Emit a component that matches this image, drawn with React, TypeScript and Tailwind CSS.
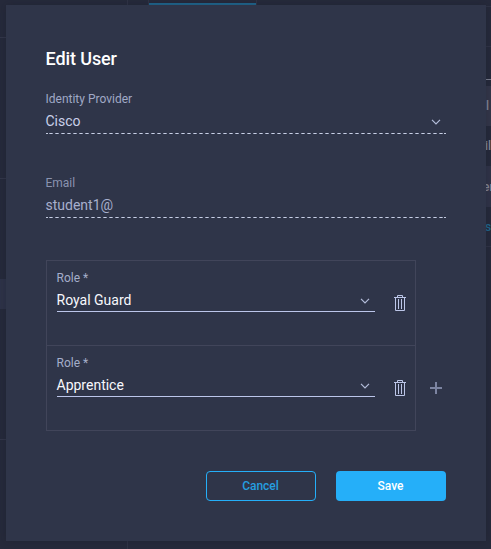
import React from "react";

function Chevron({ className }: { className?: string }) {
  return (
    <svg className={className} width="10" height="6" viewBox="0 0 10 6" fill="none" stroke="#b4bdda" strokeWidth="1.2">
      <path d="M1 0.8 L5 4.8 L9 0.8" />
    </svg>
  );
}

function Trash() {
  return (
    <svg width="12" height="16" viewBox="0 0 12 16" fill="none" stroke="#bcc6e8" strokeWidth="1" className="block">
      <path d="M0 2.5H12M3.5 2.5V0.5H8.5V2.5M1.5 2.5V15.5H10.5V2.5M4.5 4V14M7.5 4V14" />
    </svg>
  );
}

function DashedLine() {
  return (
    <div className="flex h-px gap-px">
      <span className="w-[2px] bg-[#c3cade]" />
      <span className="flex-1 bg-[repeating-linear-gradient(90deg,#949bb4_0_1px,#c8cfe4_1px_3px,#949bb4_3px_4px,transparent_4px_6px)]" />
      <span className="w-[2px] bg-[#c3cade]" />
    </div>
  );
}

function Field({ label, value, dim, chevron }: { label: string; value: string; dim?: boolean; chevron?: boolean }) {
  return (
    <div>
      <div className={`-ml-[0.5px] h-4 text-[12px] leading-4 ${dim ? "text-[#8a93b0]" : "text-[#a0a9c6]"}`}>{label}</div>
      <div
        className={`-ml-[0.5px] mt-[2px] flex h-6 items-center justify-between text-[14px] leading-6 ${dim ? "text-[#a7afcd]" : "text-[#c9d0ea]"}`}
      >
        <span>{value}</span>
        {chevron && <Chevron className="mr-[5px] mt-[2px]" />}
      </div>
      <DashedLine />
    </div>
  );
}

function Role({ value }: { value: string }) {
  return (
    <div className="flex h-[85px] border-b border-[#41455a] pl-[10px] pt-[9px]">
      <div className="w-[318px]">
        <div className="-ml-[0.5px] h-4 text-[12px] leading-4 text-[#a5aeca]">Role *</div>
        <div className="mt-[2px] flex h-6 items-center justify-between border-b border-[#bcc6ea] text-[14px] leading-6 text-[#f7f8fc]">
          <span className="-ml-[0.5px]">{value}</span>
          <Chevron className="mr-[5px] mt-[3px]" />
        </div>
      </div>
      <div className="ml-[19px] mt-[25px]">
        <Trash />
      </div>
    </div>
  );
}

function Backdrop() {
  return (
    <div className="flex h-full justify-between bg-[#262a3b]">
      <div className="flex w-[128px] flex-col border-r border-[#303446]">
        <div className="h-[38px] border-b border-[#33374a]" />
        <div className="h-[141px] border-b border-[#33374a]" />
        <div className="h-[100px]" />
        <div className="h-[30px] bg-[#2e3348]" />
        <div className="h-[131px] border-b border-[#33374a]" />
      </div>
      <div className="ml-5 mr-auto h-[5px] w-[109px] border-x border-[#303446]">
        <div className="mt-[3px] h-[2px] bg-[#20688f]" />
      </div>
      <div className="flex w-[12px] flex-col text-[12px] font-medium text-[#868998]">
        <div className="h-[7px] border-b border-[#303446]" />
        <div className="h-10 border-b border-[#303446]" />
        <div className="h-[33px] border-b border-[#7d8090]" />
        <div className="h-[6px]" />
        <div className="flex h-10 items-center justify-end bg-[#34374a] pr-[2px]">l</div>
        <div className="flex h-10 items-center justify-end">il</div>
        <div className="flex h-[41px] items-center bg-[#303448] pl-[4px]">er</div>
        <div className="flex h-10 items-center border-b border-[#303446] pl-[6px] text-[#20688f]">se</div>
      </div>
    </div>
  );
}

export default function App() {
  return (
    <div className="relative h-[549px] w-[491px] overflow-hidden font-['Roboto',sans-serif]">
      <Backdrop />
      <div className="absolute left-[6px] top-[5px] h-[536px] w-[480px] bg-[#2f3549] px-10 pt-[42px] shadow-[0_0_8px_rgba(20,22,35,0.3)]">
        <h1 className="-ml-[0.5px] h-6 text-[18px] font-medium leading-6 tracking-[-0.1px] text-white">Edit User</h1>
        <div className="mt-5">
          <Field label="Identity Provider" value="Cisco" chevron />
        </div>
        <div className="mt-[41px]">
          <Field label="Email" value="student1@" dim />
        </div>
        <div className="mt-[42px] flex">
          <div className="w-[370px] border border-b-0 border-[#41455a]">
            <Role value="Royal Guard" />
            <Role value="Apprentice" />
          </div>
          <svg width="12" height="12" viewBox="0 0 12 12" stroke="#7c84a1" strokeWidth="2" className="ml-[14px] mt-[122px]">
            <path d="M0 6H12M6 0V12" />
          </svg>
        </div>
        <div className="mt-10 flex justify-end gap-5 text-[12px] font-medium">
          <button className="h-[30px] w-[110px] rounded-[4px] border border-[#25aff9] pr-px text-[#259fe0]">Cancel</button>
          <button className="h-[30px] w-[110px] rounded-[4px] bg-[#25aff9] pr-px text-white">Save</button>
        </div>
      </div>
    </div>
  );
}
